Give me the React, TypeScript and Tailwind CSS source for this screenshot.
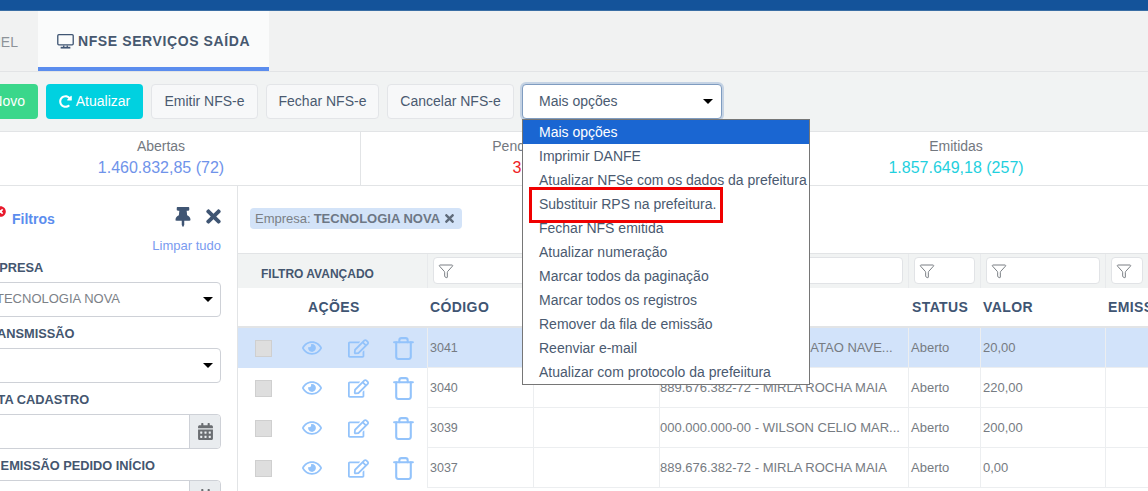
import { Filter, Trash } from "lucide-react";
import { FaCalendarAlt, FaRedoAlt, FaRegEdit, FaRegEye, FaThumbtack, FaTimes, FaTimesCircle } from "react-icons/fa";

const cols = "grid grid-cols-[189px_106px_126px_249px_72px_125px_1fr]";

const rows = [
  { code: "3041", name: "000.000.000-00 - JOÃO BATAO NAVE...", value: "20,00", selected: true },
  { code: "3040", name: "889.676.382-72 - MIRLA ROCHA MAIA", value: "220,00" },
  { code: "3039", name: "000.000.000-00 - WILSON CELIO MAR...", value: "200,00" },
  { code: "3037", name: "889.676.382-72 - MIRLA ROCHA MAIA", value: "0,00" },
];

const options = [
  "Mais opções",
  "Imprimir DANFE",
  "Atualizar NFSe com os dados da prefeitura",
  "Substituir RPS na prefeitura.",
  "Fechar NFS emitida",
  "Atualizar numeração",
  "Marcar todos da paginação",
  "Marcar todos os registros",
  "Remover da fila de emissão",
  "Reenviar e-mail",
  "Atualizar com protocolo da prefeiitura",
];

function Caret() {
  return <span className="h-0 w-0 border-x-[5px] border-t-[5px] border-x-transparent border-t-black" />;
}

function MonitorIcon() {
  return (
    <svg width="17" height="15" viewBox="0 0 19 17" fill="none" className="text-[#3f5573]">
      <rect x="0.75" y="0.75" width="17.5" height="11.5" rx="1.2" stroke="currentColor" strokeWidth="1.5" />
      <path d="M7.5 13v2M11.5 13v2" stroke="currentColor" strokeWidth="1.5" />
      <path d="M4 15.5h11" stroke="currentColor" strokeWidth="2" />
    </svg>
  );
}

function ToolButton({ label, width }: { label: string; width: string }) {
  return (
    <button className={`h-[35px] ${width} rounded-[4px] border border-[#e3e5e8] bg-[#f7f8f9] text-[14px] text-[#4a5a70]`}>
      {label}
    </button>
  );
}

function FieldLabel({ text }: { text: string }) {
  return <div className="mb-[6px] h-[16px] text-[12.8px] leading-[16px] font-bold whitespace-nowrap text-[#44566f]">{text}</div>;
}

function SelectField({ value }: { value?: string }) {
  return (
    <div className="mb-[9px] flex h-[35px] items-center justify-between rounded-[4px] border border-[#ced1d7] bg-white pr-[7px] pl-[15px] text-[13px] text-[#7c8187]">
      <span className="-mt-[2px]">{value}</span>
      <Caret />
    </div>
  );
}

function DateField() {
  return (
    <div className="mb-[9px] flex h-[35px] justify-end rounded-[4px] border border-[#ced1d7] bg-white">
      <div className="flex w-[31px] items-center justify-center rounded-r-[4px] border-l border-[#ced1d7] bg-[#e9ecef] text-[#6b6e72]">
        <FaCalendarAlt size={17} />
      </div>
    </div>
  );
}

function FilterCell() {
  return (
    <div className="border-l border-[#e8eaec] px-[5px] py-[3px]">
      <div className="flex h-[27px] items-center rounded-[4px] border border-[#e1e3e6] bg-white pl-[4px] text-[#70757b]">
        <Filter size={16} strokeWidth={1.4} />
      </div>
    </div>
  );
}

export default function App() {
  return (
    <div className="relative h-[491px] w-[1148px] overflow-hidden bg-white font-['Liberation_Sans',Arial,sans-serif]">
      <div className="h-[11px] border-b border-[#3a6ea5] bg-[#14539a]" />

      {/* Tabs */}
      <div className="flex h-[61px] border-b border-[#e2e4e6] bg-[#f1f2f2]">
        <div className="flex w-[38px] items-center justify-end pt-[2px] pr-[20px] text-[14px] whitespace-nowrap text-[#8d9399]">PAINEL</div>
        <div className="flex w-[231px] items-center gap-[4px] border-b-[4px] border-[#5b8dee] bg-[#fafbfb] pt-[4px] pl-[19px] text-[14px] font-bold tracking-[0.6px] text-[#46586f]">
          <MonitorIcon />
          NFSE SERVIÇOS SAÍDA
        </div>
      </div>

      {/* Toolbar */}
      <div className="flex h-[60px] items-center gap-[8px] border-b border-[#e2e4e6] bg-[#f1f3f3] pb-[1px]">
        <button className="-ml-[30px] h-[35px] w-[68px] rounded-[4px] bg-[#3ad78b] pr-[13px] text-right text-[14px] text-white">Novo</button>
        <button className="flex h-[35px] w-[97px] items-center justify-center gap-[4px] rounded-[4px] bg-[#00d1e0] text-[14px] text-white">
          <FaRedoAlt size={13} />
          Atualizar
        </button>
        <ToolButton label="Emitir NFS-e" width="w-[107px]" />
        <ToolButton label="Fechar NFS-e" width="w-[113px]" />
        <ToolButton label="Cancelar NFS-e" width="w-[127px]" />
        <div className="flex h-[35px] w-[200px] items-center justify-between rounded-[4px] border border-[#7f9cc0] bg-white pr-[8px] pl-[16px] text-[14px] text-[#4a5a70] shadow-[0_0_0_2px_#c5d3e4]">
          Mais opções
          <Caret />
        </div>
      </div>

      {/* Totals */}
      <div className="-ml-[38px] grid h-[54px] w-[1191px] grid-cols-[399px_398px_394px] border-b border-[#e2e4e6] text-center">
        <div className="border-r border-[#e2e4e6] pt-[6px]">
          <div className="text-[14px] leading-[17px] text-[#73787f]">Abertas</div>
          <div className="mt-[4px] text-[16px] leading-[18px] text-[#6f93ea]">1.460.832,85 (72)</div>
        </div>
        <div className="pt-[6px]">
          <div className="text-[14px] leading-[17px] text-[#73787f]">Pendente de emissão</div>
          <div className="mt-[4px] text-[16px] leading-[18px] text-[#ee1c25]">3.480,00 (12)</div>
        </div>
        <div className="pt-[6px]">
          <div className="text-[14px] leading-[17px] text-[#73787f]">Emitidas</div>
          <div className="mt-[4px] text-[16px] leading-[18px] text-[#1fd0de]">1.857.649,18 (257)</div>
        </div>
      </div>

      <div className="flex">
        {/* Filters sidebar */}
        <aside className="h-[306px] w-[238px] shrink-0 border-r border-[#e2e4e6]">
          <div className="-ml-[20px] w-[241px] pt-[21px]">
            <div className="relative flex h-[19px] items-center justify-between pl-[32px]">
              <FaTimesCircle size={11} className="absolute top-[-1px] left-[15px] text-[#e8192c]" />
              <span className="mt-[6px] text-[14px] font-bold text-[#5b8dee]">Filtros</span>
              <div className="-mr-[3px] flex items-center gap-[10px] text-[#3f5573]">
                <FaThumbtack size={20} />
                <FaTimes size={21} />
              </div>
            </div>
            <div className="mt-[12px] mb-[6px] text-right text-[13px] leading-[16px] text-[#7a9bf0]">Limpar tudo</div>
            <FieldLabel text="EMPRESA" />
            <SelectField value="TECNOLOGIA NOVA" />
            <FieldLabel text="TRANSMISSÃO" />
            <SelectField />
            <FieldLabel text="DATA CADASTRO" />
            <DateField />
            <FieldLabel text="DT EMISSÃO PEDIDO INÍCIO" />
            <DateField />
          </div>
        </aside>

        {/* Table */}
        <main className="min-w-0 flex-1">
          <div className="h-[67px] pt-[20px] pl-[12px]">
            <span className="inline-flex h-[21px] w-[212px] items-center gap-[3px] rounded-[4px] bg-[#d3e3f8] pl-[5px] text-[13px] whitespace-nowrap text-[#7a7f85]">
              Empresa:
              <b className="font-bold text-[#6d7785]">TECNOLOGIA NOVA</b>
              <FaTimes size={13} className="text-[#5f6b7a]" />
            </span>
          </div>

          <div className={`${cols} h-[35px] border-t border-[#e2e4e6] bg-[#f1f3f3]`}>
            <div className="pt-[11px] pl-[23px] text-[12px] font-bold text-[#44566f]">FILTRO AVANÇADO</div>
            <FilterCell />
            <FilterCell />
            <FilterCell />
            <FilterCell />
            <FilterCell />
            <FilterCell />
          </div>

          <div className={`${cols} h-[40px] items-center border-b-2 border-[#e2e4e6] text-[14px] font-bold tracking-[0.4px] text-[#3f5573]`}>
            <div className="pl-[70px]">AÇÕES</div>
            <div className="pl-[3px]">CÓDIGO</div>
            <div />
            <div />
            <div className="pl-[4px]">STATUS</div>
            <div className="pl-[3px]">VALOR</div>
            <div className="pl-[3px] whitespace-nowrap">EMISSÃO</div>
          </div>

          {rows.map((row) => (
            <div key={row.code} className={`${cols} h-[40px] text-[13px] text-[#767b82] ${row.selected ? "bg-[#d2e3fa]" : ""}`}>
              <div className="flex items-center pl-[17px] text-[#93c3fb]">
                <span className="h-[17px] w-[17px] border border-[#cfcfcf] bg-[#dedede]" />
                <FaRegEye size={20} className="ml-[30px]" />
                <FaRegEdit size={21} className="ml-[26px]" />
                <Trash size={25} strokeWidth={2} className="ml-[22px]" />
              </div>
              <div className="flex items-center border-b border-l border-[#eceef0] pt-[2px] pl-[2px] text-[12.5px]">{row.code}</div>
              <div className="border-b border-l border-[#eceef0]" />
              <div className="flex items-center border-b border-l border-[#eceef0] whitespace-nowrap">{row.name}</div>
              <div className="flex items-center border-b border-l border-[#eceef0] pl-[2px]">Aberto</div>
              <div className="flex items-center border-b border-l border-[#eceef0] pl-[2px]">{row.value}</div>
              <div className="border-b border-l border-[#eceef0]" />
            </div>
          ))}
        </main>
      </div>

      {/* Open dropdown */}
      <div className="absolute top-[119px] left-[522px] w-[288px] border border-[#767676] bg-white text-[14px] text-[#4a5a70]">
        {options.map((option, i) => (
          <div key={option} className={`h-[24px] pl-[16px] leading-[24px] whitespace-nowrap ${i === 0 ? "bg-[#1a66d2] text-white" : ""}`}>
            {option}
          </div>
        ))}
      </div>

      {/* Red highlight */}
      <div className="absolute top-[187px] left-[529px] h-[36px] w-[194px] border-[3px] border-[#f00000]" />
    </div>
  );
}
